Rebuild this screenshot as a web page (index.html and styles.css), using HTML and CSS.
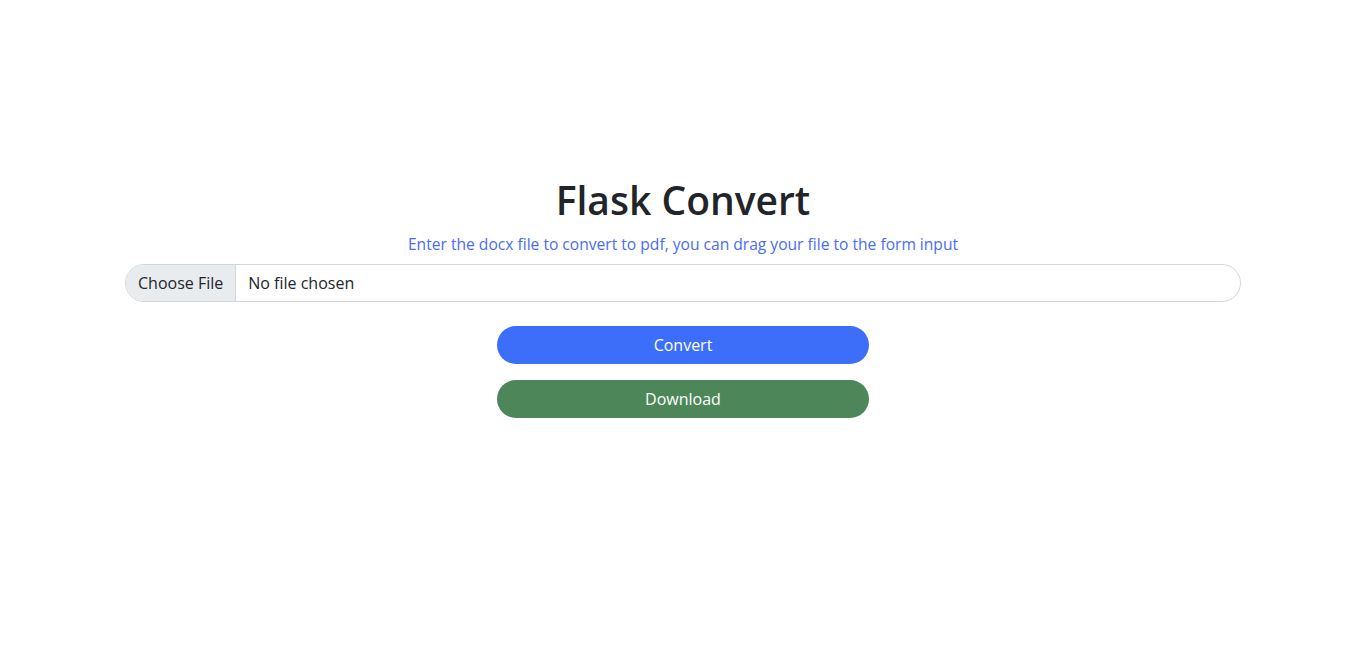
FILE: index.html
```html
<!DOCTYPE html>
<html lang="en">
<head>
<meta charset="utf-8">
<title>Flask Convert</title>
<link rel="stylesheet" href="styles.css">
</head>
<body>
<main class="container">
  <h1 class="title">Flask Convert</h1>
  <p class="subtitle">Enter the docx file to convert to pdf, you can drag your file to the form input</p>
  <form class="form">
    <input class="file-input" type="file" name="file" accept=".docx">
    <div class="actions">
      <button type="submit" class="btn btn-convert">Convert</button>
      <button type="button" class="btn btn-download">Download</button>
    </div>
  </form>
</main>
</body>
</html>
```

FILE: styles.css
```css
* { box-sizing: border-box; }
html, body { margin: 0; padding: 0; background: #fff; }
body {
  font-family: "Open Sans", "Noto Sans", sans-serif;
  font-size: 16px;
  line-height: 1.5;
  color: #212529;
}
.container {
  width: 1140px;
  margin: 0 auto;
  padding: 176px 12px 0;
}
.title {
  margin: 0 0 8px;
  font-size: 39px;
  font-weight: 600;
  line-height: 48px;
  text-align: center;
  color: #212529;
}
.subtitle {
  margin: 0 0 8px;
  text-align: center;
  color: #4a6cf7;
  font-size: 15.6px;
  line-height: 24px;
}
.form { display: flex; flex-direction: column; }
.file-input {
  display: block;
  width: 100%;
  height: 38px;
  padding: 6px 12px;
  font-family: inherit;
  font-size: 16px;
  line-height: 24px;
  color: #212529;
  background: #fff;
  border: 1px solid #d3d6da;
  border-radius: 50rem;
  overflow: hidden;
}
.file-input::file-selector-button {
  height: 36px;
  margin: -6px 12px -6px -12px;
  padding: 6px 12px;
  font-family: inherit;
  font-size: 16px;
  line-height: 24px;
  color: #212529;
  background: #e9ecef;
  border: 0;
  border-right: 1px solid #d3d6da;
  border-radius: 0;
}
.actions {
  display: flex;
  flex-direction: column;
  align-items: center;
  gap: 16px;
  margin-top: 24px;
}
.btn {
  width: 372px;
  height: 38px;
  padding: 6px 12px;
  font-family: inherit;
  font-size: 16px;
  line-height: 24px;
  color: #fff;
  border: 0;
  border-radius: 50rem;
  cursor: pointer;
}
.btn-convert { background: #3d6efa; }
.btn-download { background: #4d8759; }
```
